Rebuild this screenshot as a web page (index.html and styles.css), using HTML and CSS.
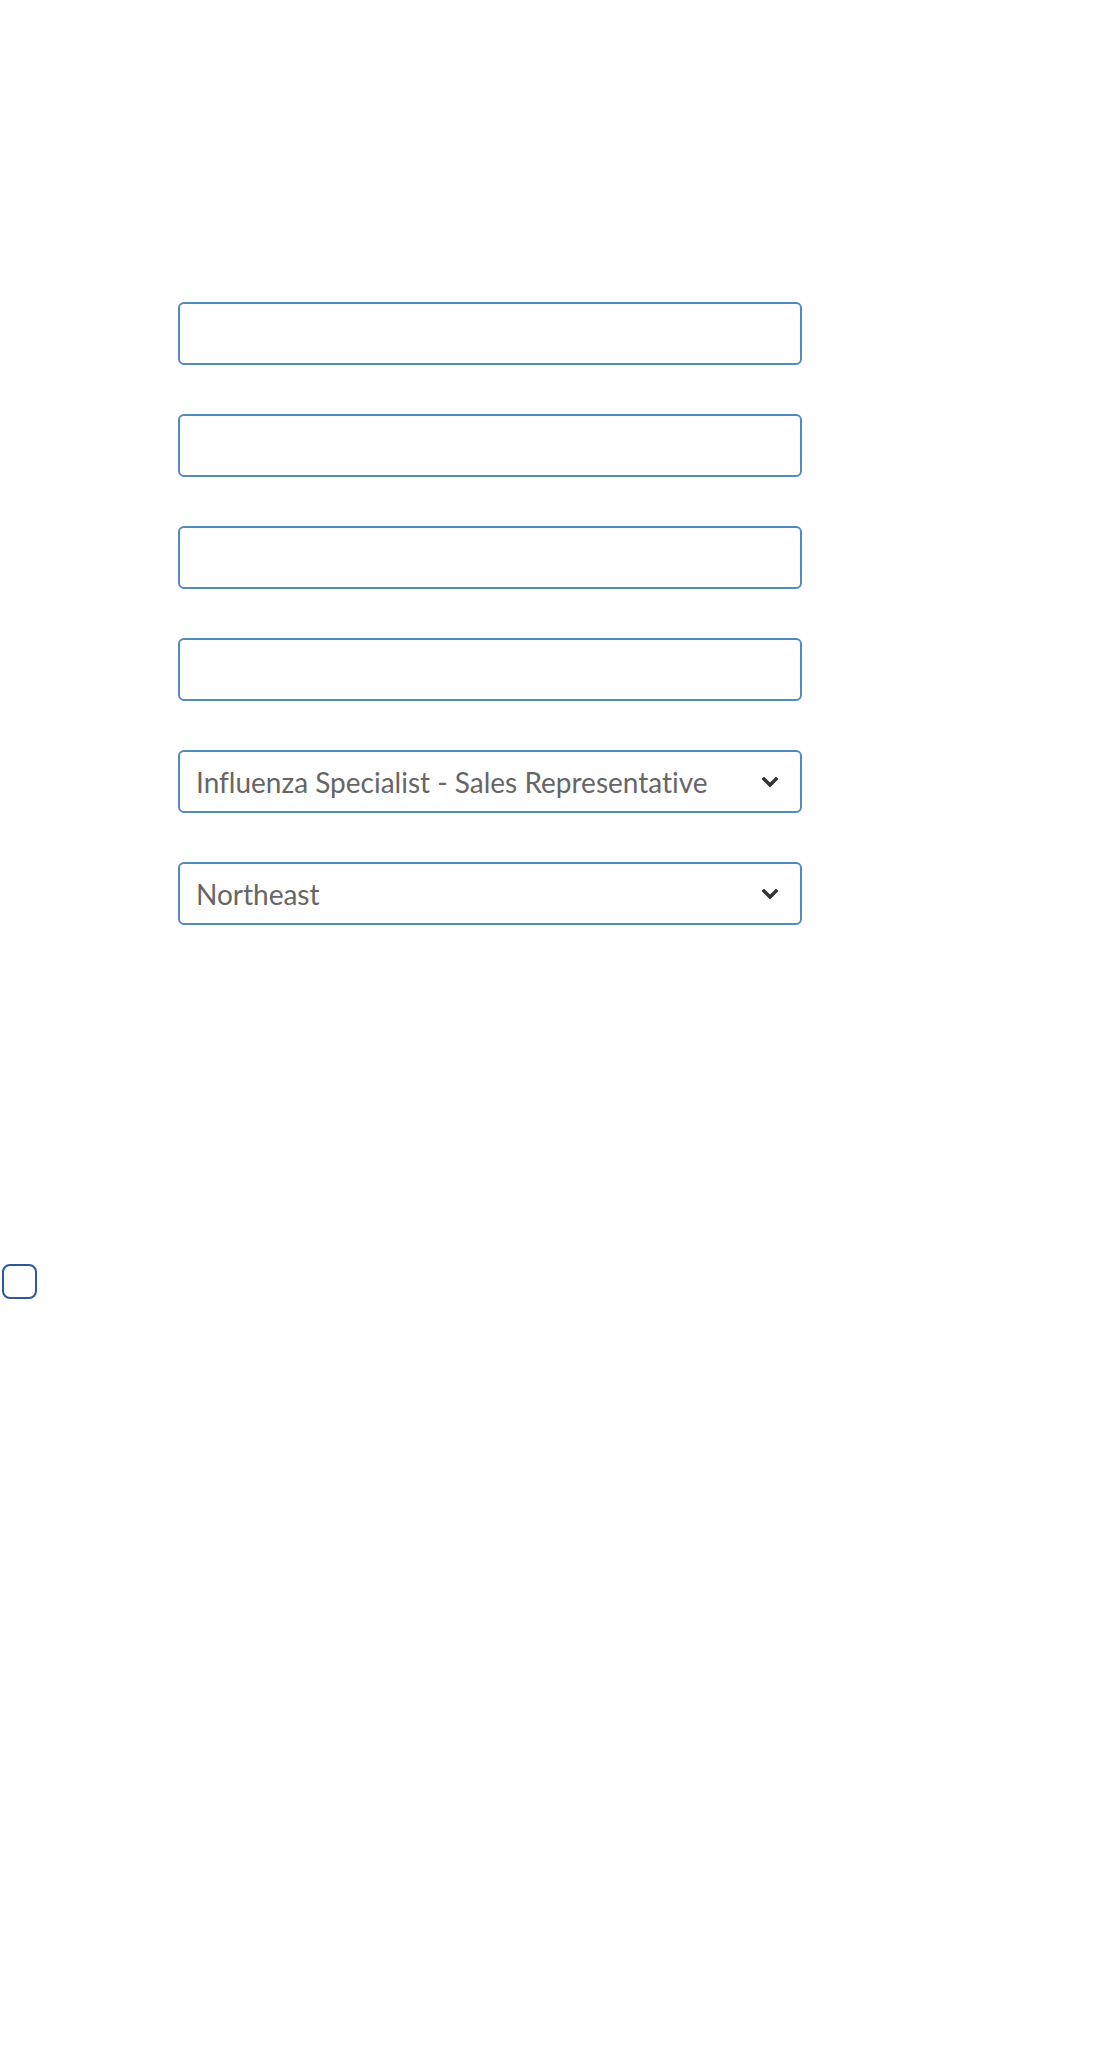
FILE: index.html
```html
<!DOCTYPE html>
<html lang="en">
<head>
<meta charset="utf-8">
<title>Form</title>
<link rel="stylesheet" href="styles.css">
</head>
<body>
<form class="form">
  <div class="fields">
    <input class="field" type="text" aria-label="First name">
    <input class="field" type="text" aria-label="Last name">
    <input class="field" type="text" aria-label="Email">
    <input class="field" type="text" aria-label="Phone">
    <div class="select-wrap">
      <select class="field select" aria-label="Position">
        <option>Influenza Specialist - Sales Representative</option>
      </select>
      <svg class="chev" width="16" height="11" viewBox="0 0 16 11" aria-hidden="true"><path d="M2 2 L8 8 L14 2" fill="none" stroke="#333" stroke-width="3.4" stroke-linecap="square"/></svg>
    </div>
    <div class="select-wrap">
      <select class="field select" aria-label="Region">
        <option>Northeast</option>
      </select>
      <svg class="chev" width="16" height="11" viewBox="0 0 16 11" aria-hidden="true"><path d="M2 2 L8 8 L14 2" fill="none" stroke="#333" stroke-width="3.4" stroke-linecap="square"/></svg>
    </div>
  </div>
  <div class="check-row">
    <input class="check" type="checkbox" aria-label="Agree">
  </div>
</form>
</body>
</html>
```

FILE: styles.css
```css
html, body {
  margin: 0;
  padding: 0;
  background: #ffffff;
}
body {
  width: 1106px;
  min-height: 2060px;
  font-family: Lato, "Open Sans", sans-serif;
}
.form {
  display: flex;
  flex-direction: column;
  padding-top: 302px;
}
.fields {
  display: flex;
  flex-direction: column;
  gap: 49px;
  margin-left: 178px;
  width: 624px;
}
.field {
  box-sizing: border-box;
  width: 624px;
  height: 63px;
  margin: 0;
  border: 2px solid #5189c1;
  border-radius: 6px;
  background: #ffffff;
  font-family: Lato, sans-serif;
  font-size: 28px;
  font-weight: 400;
  font-variant-ligatures: none;
  color: #666666;
  padding: 0 16px;
  outline: none;
}
.select-wrap {
  position: relative;
  width: 624px;
  height: 63px;
}
.select {
  appearance: none;
  -webkit-appearance: none;
  display: block;
  padding-left: 16px;
}
.chev {
  position: absolute;
  right: 24px;
  top: 27px;
  pointer-events: none;
}
.check-row {
  display: flex;
  margin-top: 339px;
  padding-left: 2px;
}
.check {
  appearance: none;
  -webkit-appearance: none;
  box-sizing: border-box;
  width: 35px;
  height: 35px;
  margin: 0;
  border: 2px solid #2d5899;
  border-radius: 8px;
  background: #ffffff;
}
```
